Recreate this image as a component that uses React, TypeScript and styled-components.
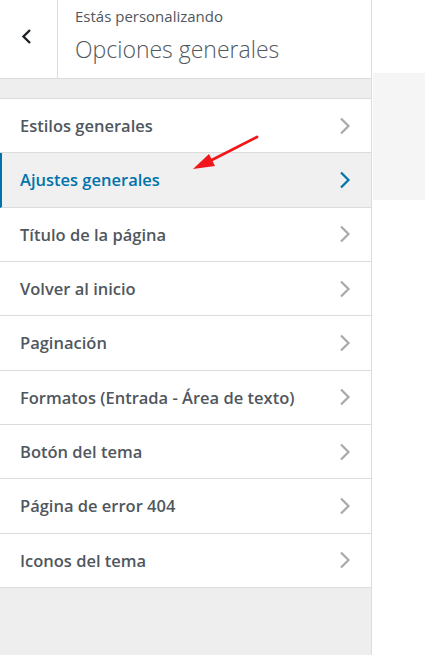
import React from 'react';
import styled, { createGlobalStyle } from 'styled-components';

const GlobalStyle = createGlobalStyle`
  html, body {
    margin: 0;
    padding: 0;
    background: #ffffff;
  }
  body {
    font-family: "Open Sans", "Noto Sans", "Liberation Sans", sans-serif;
  }
  * {
    box-sizing: border-box;
  }
`;

const Page = styled.div`
  display: flex;
  width: 425px;
  height: 655px;
  overflow: hidden;
`;

const Sidebar = styled.aside`
  position: relative;
  width: 372px;
  flex-shrink: 0;
  background: #eeeeee;
  border-right: 1px solid #dcdcde;
  display: flex;
  flex-direction: column;
`;

const Header = styled.header`
  display: flex;
  height: 79px;
  background: #ffffff;
  border-bottom: 1px solid #dcdcde;
`;

const BackButton = styled.button`
  width: 58px;
  flex-shrink: 0;
  border: 0;
  border-right: 1px solid #dcdcde;
  background: #ffffff;
  padding: 0 5px 6px 0;
  display: flex;
  align-items: center;
  justify-content: center;
  cursor: pointer;
`;

const TitleBlock = styled.div`
  display: flex;
  flex-direction: column;
  padding: 5px 0 0 17px;
  color: #50575e;
`;

const Eyebrow = styled.span`
  font-size: 15px;
  line-height: 23px;
`;

const Title = styled.h1`
  margin: 0;
  font-size: 23px;
  font-weight: 300;
  line-height: 42px;
`;

const Band = styled.div`
  height: 19px;
`;

const List = styled.ul`
  list-style: none;
  margin: 0;
  padding: 0;
  border-top: 1px solid #dcdcde;
`;

const Row = styled.li<{ $active?: boolean }>`
  height: 54.33px;
  display: flex;
  align-items: center;
  justify-content: space-between;
  padding: 0 20px 0 20px;
  background: ${p => (p.$active ? '#f0f0f1' : '#ffffff')};
  border-bottom: 1px solid #dcdcde;
  border-left: ${p => (p.$active ? '2px solid #0073aa' : '0')};
  padding-left: ${p => (p.$active ? '18px' : '20px')};
  color: ${p => (p.$active ? '#0073aa' : '#50575e')};
  font-size: 16.5px;
  font-weight: 600;
`;

const Chevron = styled.svg<{ $active?: boolean }>`
  width: 12px;
  height: 18px;
  color: ${p => (p.$active ? '#0073aa' : '#a7aaad')};
`;

const Rest = styled.div`
  flex: 1;
`;

const Preview = styled.main`
  flex: 1;
  padding-top: 73px;
  padding-left: 1px;
`;

const PreviewBlock = styled.div`
  height: 127px;
  background: #f5f5f5;
`;

const Pointer = styled.svg`
  position: absolute;
  left: 188px;
  top: 132px;
  width: 76px;
  height: 44px;
  pointer-events: none;
`;

const items = [
  'Estilos generales',
  'Ajustes generales',
  'Título de la página',
  'Volver al inicio',
  'Paginación',
  'Formatos (Entrada - Área de texto)',
  'Botón del tema',
  'Página de error 404',
  'Iconos del tema',
];

const App: React.FC = () => {
  return (
    <>
      <GlobalStyle />
      <Page>
        <Sidebar>
          <Header>
            <BackButton aria-label="Volver">
              <svg width="11" height="15" viewBox="0 0 11 15">
                <path d="M9 1 L2.5 7.5 L9 14" fill="none" stroke="#1d2327" strokeWidth="2.4" />
              </svg>
            </BackButton>
            <TitleBlock>
              <Eyebrow>Estás personalizando</Eyebrow>
              <Title>Opciones generales</Title>
            </TitleBlock>
          </Header>
          <Band />
          <List>
            {items.map((label, i) => (
              <Row key={label} $active={i === 1}>
                <span>{label}</span>
                <Chevron $active={i === 1} viewBox="0 0 12 18">
                  <path d="M2 1.5 L9.5 9 L2 16.5" fill="none" stroke="currentColor" strokeWidth="2.2" />
                </Chevron>
              </Row>
            ))}
          </List>
          <Rest />
          <Pointer viewBox="0 0 76 44">
            <line x1="69" y1="5" x2="16" y2="32" stroke="#f2161b" strokeWidth="2.8" strokeLinecap="round" />
            <polygon points="5,37 21,22 27,34" fill="#f2161b" />
          </Pointer>
        </Sidebar>
        <Preview>
          <PreviewBlock />
        </Preview>
      </Page>
    </>
  );
};

export default App;
